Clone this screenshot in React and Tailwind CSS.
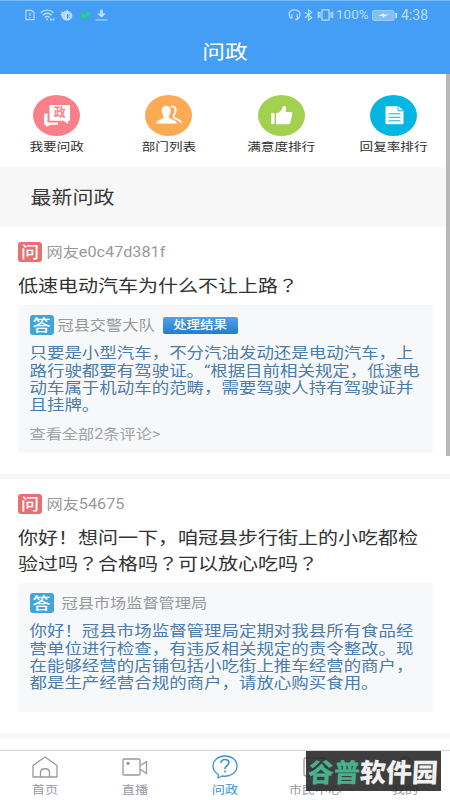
import React from 'react';

// One line of condensed-height text; the wrapper's height sets the line box.
function Line({ className = '', children }) {
  return (
    <div className={`flex items-center whitespace-nowrap ${className}`}>
      <span className="block origin-center scale-y-[0.87] leading-none">{children}</span>
    </div>
  );
}

// Full-width question mark centred in its cell.
function Q() {
  return <span className="font-['Noto_Sans_CJK_JP',sans-serif] leading-[0]">？</span>;
}

function StatusBar() {
  return (
    <div className="flex h-[28px] items-center justify-between pl-[25px] pr-[22px] text-[#b9ddff]">
      <div className="flex items-center gap-[5px]">
        <svg className="h-[12px] w-[10px]" viewBox="0 0 11 12" fill="none" stroke="currentColor" strokeWidth="1.3">
          <path d="M1 1h6.3L10 3.5V11H1zM5.5 3.5v3.6M5.5 8.2v1.3" />
        </svg>
        <svg className="h-[12px] w-[15px]" viewBox="0 0 15 12" fill="none" stroke="currentColor" strokeWidth="1.3">
          <path d="M.7 3.7C4.6.3 9.700.3 13.600 3.700M2.700 6.200c2.800-2.400 6.200-2.400 9 0M4.700 8.500c1.500-1.300 3.500-1.300 5 0" />
          <circle cx="7" cy="10.300" r="1" fill="currentColor" stroke="none" />
          <path d="M10 10.500h4.500" strokeDasharray="1.800 .7" strokeWidth="1.800" />
        </svg>
        <svg className="h-[12px] w-[13px]" viewBox="0 0 13 12">
          <path fill="currentColor" d="M1 2.500 3.500 3C4.500 2 5.500 1.800 6.500 1.800L7 .3l1 1.700c2 .3 4 2 4.300 4.500.2 3-2.300 5-5.300 5S1.700 9.500 1.700 7L.2 5.300 1.800 4.800z" />
          <path d="M7.500 5v4.500M10 5.500 8 7.300l2 2" stroke="#459bf1" fill="none" />
        </svg>
        <svg className="ml-px h-[10px] w-[12px]" viewBox="0 0 12 10">
          <path fill="#27c0a0" d="M1 2.500 5 3l6.500-1.200L10 7 6 9.500 2 8z" />
          <path d="m3 4.500 2.500 2L10 3" fill="none" stroke="#3ddc7c" />
        </svg>
        <svg className="ml-[-1px] h-[12px] w-[13px]" viewBox="0 0 13 13">
          <path fill="currentColor" d="M5 .8h3V5h3.200L6.500 9.500 1.800 5H5zM0 11.300h13v1.200H0z" />
        </svg>
      </div>
      <div className="flex items-center">
        <svg className="h-[12px] w-[13px]" viewBox="0 0 13 12" fill="none" stroke="currentColor" strokeWidth="1.200">
          <path d="M2 7.500C-.3 4.300 2 .8 6.500.8S13 4 11.500 7.500c-.7 2.200-2 3.300-4.500 3.500M3.800 5.200v4H2.500L1.500 7M9.200 5.200v4h1.300" />
        </svg>
        <svg className="ml-[3px] h-[12px] w-[9px]" viewBox="0 0 9 12" fill="none" stroke="currentColor" strokeWidth="1.100">
          <path d="m.8 3.300 6.900 5.200-3.200 2.700V.8l3.200 2.700L.8 8.700" />
        </svg>
        <svg className="ml-[4px] h-[12px] w-[17px]" viewBox="0 0 17 12" fill="none" stroke="currentColor" strokeWidth="1.200">
          <path d="M5 .8h7v10.400H5zM.8 2.500l1 1.500-1 1.500 1 1.500-1 2M3 3v6M14 3v6M16.200 2.500l-1 1.500 1 1.500-1 1.500 1 2" />
        </svg>
        <span className="ml-[2px] w-[36px] whitespace-nowrap text-[13.5px] leading-none">100%</span>
        <svg className="h-[11px] w-[25px]" viewBox="0 0 25 11">
          <rect x=".5" y=".5" width="21.500" height="10" rx="1.500" fill="#83bef7" stroke="#9fcdfb" />
          <path fill="#e5f4ff" d="M6 5.500 10.500 4V2.500l2 2h4.500l-5 2v1.500l-2-2zM23.500 3H25v5h-1.500z" />
        </svg>
        <span className="ml-[4px] text-[14px] leading-none">4:38</span>
      </div>
    </div>
  );
}

function AskIcon() {
  return (
    <svg className="h-[41px] w-[47px]" viewBox="0 0 47 41">
      <path fill="#fff" d="M11 18.500h3.500v9H25v2.200H18l-5 2-.2-2H11z" />
      <path fill="#fff" d="M16.500 10H37v15.800h-2l.2 3.200-4.500-3.200H16.500z" />
      <text x="26.700" y="22.200" textAnchor="middle" fontSize="12" fontWeight="700" fill="#f8808a">政</text>
    </svg>
  );
}

function PeopleIcon() {
  return (
    <svg className="h-[41px] w-[47px]" viewBox="0 0 47 41">
      <path fill="none" stroke="#fff" strokeWidth="1.800" d="M26 11.500c5-.8 6 4.500 2.700 9v2.300c3.500 1.200 6.500 2.200 7.500 5" />
      <path fill="#fff" stroke="#fdaa55" strokeWidth=".8" d="M11 29c0-4 4-4.500 7-6v-2.500c-2.500-3-2.500-9.900 3-10.100 6 0 6 6.700 3.500 10.200V23c3 1.500 7.500 2 8 6z" />
    </svg>
  );
}

function ThumbIcon() {
  return (
    <svg className="h-[41px] w-[47px]" viewBox="0 0 47 41" fill="#fff">
      <rect x="13" y="18" width="3.500" height="11" rx="1" />
      <path d="M18 18.500c4-1 6-3.500 6.500-6.500.5-1.500 4-1.500 3.700 1.500L27.500 17H33c1.500 0 1.500 1 1.200 2.500L32.500 27c-.5 2-1.500 2.200-3 2.200H18z" />
    </svg>
  );
}

function DocIcon() {
  return (
    <svg className="h-[41px] w-[47px]" viewBox="0 0 47 41">
      <path fill="#fff" d="M17 11.300h11.500l5 4.500v12c0 1-.5 1.500-1.500 1.500H17c-1 0-1.500-.5-1.500-1.500v-15c0-1 .5-1.500 1.500-1.500z" />
      <path fill="none" stroke="#05b5e2" d="M28 11.500v4.300h5M18.500 18.800h12M18.500 22.300h12M18.500 25.800h12" />
    </svg>
  );
}

function Shortcut({ color, icon, label }) {
  return (
    <div className="flex w-[112.3px] flex-col items-center">
      <div className={`h-[41px] w-[47px] rounded-[50%] ${color}`}>{icon}</div>
      <Line className="mt-[4px] h-[16px] text-[13.6px] text-[#303030]">{label}</Line>
    </div>
  );
}

function Badge({ color, children }) {
  return (
    <div className={`flex h-[20px] w-[24px] items-center justify-center rounded-[3px] pt-px text-[18px] font-medium text-white ${color}`}>
      <span className="block scale-y-[0.87] leading-none">{children}</span>
    </div>
  );
}

function Asker({ name }) {
  return (
    <div className="flex h-[20px] items-center gap-[4.500px]">
      <Badge color="bg-[#e87073]">问</Badge>
      <Line className="pt-[3px] text-[16.2px] text-[#999]">{name}</Line>
    </div>
  );
}

function Answer({ lines }) {
  return (
    <div className="mt-[10.500px] text-[17.47px] text-[#4b7caa]">
      {lines.map((line) => (
        <Line key={line} className="h-[17.2px]">{line}</Line>
      ))}
    </div>
  );
}

function Tab({ label, active, children }) {
  return (
    <div className={`flex w-[90px] flex-col items-center pt-[4px] ${active ? 'text-[#3d91d8]' : 'text-[#98999f]'}`}>
      <svg className="h-[24px] w-[28px]" viewBox="0 0 28 24" fill="none" stroke="currentColor" strokeWidth="1.300" strokeLinejoin="round">
        {children}
      </svg>
      <Line className="mt-[4px] h-[15px] text-[13.2px]">{label}</Line>
    </div>
  );
}

export default function App() {
  return (
    <div className="relative flex h-[800px] w-[450px] flex-col overflow-hidden bg-white font-[Roboto,'Noto_Sans_CJK_SC',sans-serif]">
      <header className="h-[74px] shrink-0 border-t border-[#79bcf9] bg-[#459ef5]">
        <StatusBar />
        <Line className="h-[48px] justify-center text-[22.7px] text-white">问政</Line>
      </header>

      <nav className="flex h-[93px] shrink-0 pl-[0.5px] pt-[21px]">
        <Shortcut color="bg-[#f97f89]" icon={<AskIcon />} label="我要问政" />
        <Shortcut color="bg-[#fdaa55]" icon={<PeopleIcon />} label="部门列表" />
        <Shortcut color="bg-[#a1d14f]" icon={<ThumbIcon />} label="满意度排行" />
        <Shortcut color="bg-[#05b5e2]" icon={<DocIcon />} label="回复率排行" />
      </nav>

      <Line className="h-[60px] shrink-0 bg-[#f7f7f7] pl-[30.500px] pt-[2px] text-[21px] text-[#3a3a3a]">最新问政</Line>

      <article className="h-[247px] shrink-0 px-[18px] pt-[15px]">
        <Asker name="网友e0c47d381f" />
        <Line className="mt-[11px] h-[26px] text-[20px] text-[#333]">低速电动汽车为什么不让上路<Q /></Line>
        <section className="mt-[6px] h-[148px] w-[414.500px] bg-[#f6f8fa] pl-[11.500px] pt-[10px]">
          <div className="flex h-[20px] items-center">
            <Badge color="bg-[#42a5d9]">答</Badge>
            <Line className="ml-[4px] pt-[2px] text-[16.2px] text-[#999]">冠县交警大队</Line>
            <div className="ml-[8px] flex h-[17px] w-[75px] items-center justify-center rounded-[2px] bg-linear-to-b from-[#51a2e8] to-[#267bcb] pt-px text-[13.5px] font-medium text-white">
              <span className="block scale-y-[0.87] leading-none">处理结果</span>
            </div>
          </div>
          <Answer
            lines={[
              '只要是小型汽车，不分汽油发动还是电动汽车，上',
              '路行驶都要有驾驶证。“根据目前相关规定，低速电',
              '动车属于机动车的范畴，需要驾驶人持有驾驶证并',
              '且挂牌。',
            ]}
          />
          <Line className="mt-[11px] h-[20px] text-[16.2px] text-[#a2a2a2]">查看全部2条评论&gt;</Line>
        </section>
      </article>

      <div className="h-[5px] shrink-0 bg-[#f7f7f7]" />

      <article className="h-[254px] shrink-0 px-[18px] pt-[15px]">
        <Asker name="网友54675" />
        <div className="mt-[11px] text-[20px] text-[#333]">
          <Line className="h-[26px]">你好！想问一下，咱冠县步行街上的小吃都检</Line>
          <Line className="h-[26px]">验过吗<Q />合格吗<Q />可以放心吃吗<Q /></Line>
        </div>
        <section className="mt-[6px] h-[129px] w-[414.500px] bg-[#f6f8fa] pl-[11.500px] pt-[10px]">
          <div className="flex h-[20px] items-center gap-[8px]">
            <Badge color="bg-[#42a5d9]">答</Badge>
            <Line className="pt-[2px] text-[16.2px] text-[#999]">冠县市场监督管理局</Line>
          </div>
          <Answer
            lines={[
              '你好！冠县市场监督管理局定期对我县所有食品经',
              '营单位进行检查，有违反相关规定的责令整改。现',
              '在能够经营的店铺包括小吃街上推车经营的商户，',
              '都是生产经营合规的商户，请放心购买食用。',
            ]}
          />
        </section>
      </article>

      <div className="h-[5px] shrink-0 bg-[#f7f7f7]" />

      <footer className="mt-[12px] flex h-[50px] shrink-0 border-t border-[#d5d5d5]">
        <Tab label="首页">
          <path d="M2 10.500 14 2l12 8.500V22H2zM9.500 22v-4.500c0-5 9-5 9 0V22" />
        </Tab>
        <Tab label="直播">
          <rect x="2" y="4" width="17" height="16" rx="1" />
          <path d="m19.500 10.500 6-4v12l-6-4" />
          <circle cx="7" cy="8.500" r="1" fill="currentColor" />
        </Tab>
        <Tab label="问政" active>
          <path d="M14 1C7 1 2 5.500 2 11c0 4 2.500 7 5.500 8.700L7 23l4-2c9 1.500 15-4 15-10S21 1 14 1z" />
          <path strokeWidth="1.600" d="M10 8c0-4.500 8-4.500 8-.5 0 3-4 3-4 6.500M14 15.500v2" />
        </Tab>
        <Tab label="市民中心">
          <rect x="3" y="3" width="22" height="18" rx="2" />
          <path d="M7 9h14M7 14h9" />
        </Tab>
        <Tab label="我的">
          <circle cx="14" cy="7" r="5" />
          <path d="M4 22c0-11 20-11 20 0" />
        </Tab>
      </footer>

      <div className="absolute right-0 top-[74px] h-[382px] w-[4.500px] bg-[#b7b7b7]" />

      <div className="absolute left-[306px] top-[751px] flex h-[40px] w-[135px] items-center justify-center bg-[#292929]/90 font-['Noto_Sans_CJK_SC',sans-serif] text-[26px] font-black leading-none">
        <span className="block -skew-x-3 whitespace-nowrap text-[#47b08c]">
          谷普<span className="text-[#f1f1f1]">软件园</span>
        </span>
      </div>
    </div>
  );
}
